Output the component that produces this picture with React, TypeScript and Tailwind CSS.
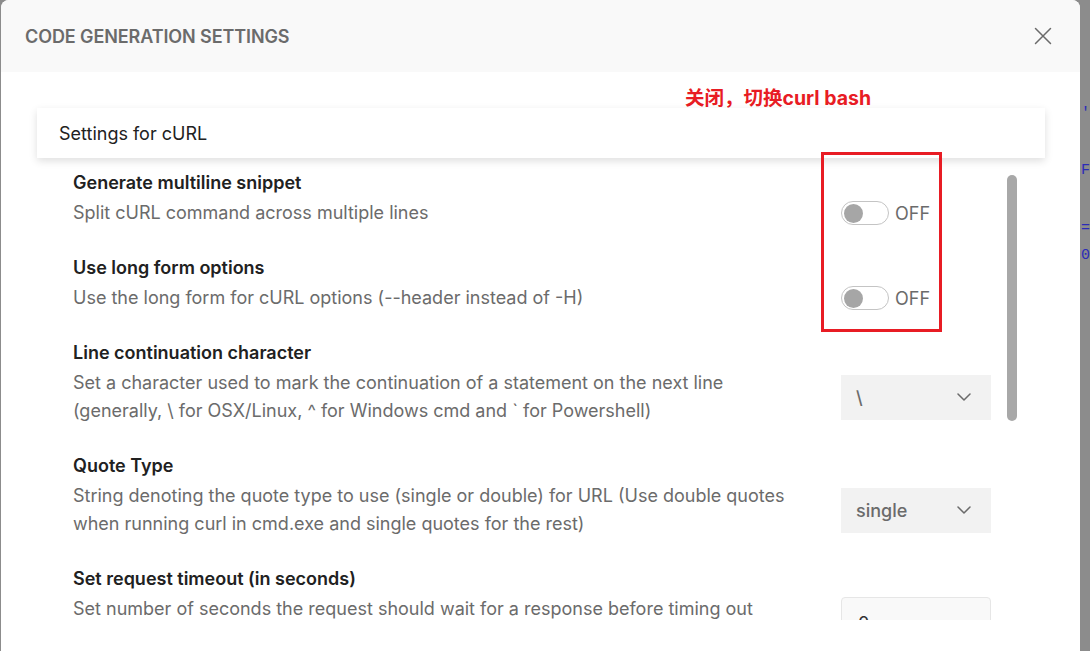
const font = { fontFamily: "Inter, 'Noto Sans CJK SC', sans-serif" }

const Toggle = () => (
  <div className="flex items-center">
    <div className="w-[48px] h-[24px] rounded-full border border-[#c4c4c4] bg-white flex items-center pl-[2px]">
      <div className="w-[19px] h-[19px] rounded-full bg-[#a6a6a6]" />
    </div>
    <span className="ml-[6px] text-[18px] text-[#6b6b6b]">OFF</span>
  </div>
)

const Select = ({ value }: { value: string }) => (
  <div className="w-[150px] h-[45px] bg-[#f2f2f2] flex items-center justify-between pl-[15px] pr-[20px]">
    <span className="text-[18px] font-medium text-[#6b6b6b]">{value}</span>
    <svg width="14" height="8" viewBox="0 0 14 8" fill="none">
      <path d="M1 1l6 6 6-6" stroke="#6b6b6b" strokeWidth="1.5" strokeLinecap="round" strokeLinejoin="round" />
    </svg>
  </div>
)

const Row = ({ title, desc, control, descClass = "" }: { title: string; desc: string; control: React.ReactNode; descClass?: string }) => (
  <div className="flex flex-col">
    <div className="text-[18px] leading-[24px] font-semibold text-[#212121]">{title}</div>
    <div className="flex items-center mt-[4px]">
      <div className={"w-[724px] text-[18px] leading-[28px] text-[#6b6b6b] " + descClass}>{desc}</div>
      <div className="ml-[44px]">{control}</div>
    </div>
  </div>
)

export default function App() {
  return (
    <div className="w-[1090px] h-[651px] bg-[#8c8c8c] flex overflow-hidden" style={font}>
      <div className="ml-px w-[1080px] h-full bg-white rounded-t-lg flex flex-col overflow-hidden">
        <div className="h-[72px] shrink-0 bg-[#f9f9f9] flex items-center justify-between pl-[24px] pr-[28px]">
          <span className="text-[18px] font-semibold text-[#6b6b6b] tracking-[-0.1px]">CODE GENERATION SETTINGS</span>
          <svg width="18" height="18" viewBox="0 0 18 18" fill="none">
            <path d="M1.5 1.5l15 15M16.5 1.5l-15 15" stroke="#6b6b6b" strokeWidth="1.5" strokeLinecap="round" />
          </svg>
        </div>

        <div className="relative flex-1 flex flex-col">
          <div className="h-[36px] shrink-0 pl-[684px] pt-[15px]">
            <span className="text-[19.5px] leading-[22px] font-bold text-[#e81c24]">关闭，切换curl bash</span>
          </div>

          <div className="ml-[36px] w-[1008px] h-[50px] shrink-0 bg-white shadow-[0_3px_8px_rgba(0,0,0,0.13)] flex items-center pl-[22px] relative z-10">
            <span className="text-[18px] text-[#212121]">Settings for cURL</span>
          </div>

          <div className="relative h-[462px] shrink-0 overflow-hidden pl-[72px] pt-[13px] flex flex-col gap-[29px]">
            <Row title="Generate multiline snippet" desc="Split cURL command across multiple lines" control={<Toggle />} />
            <Row title="Use long form options" desc="Use the long form for cURL options (--header instead of -H)" control={<Toggle />} />
            <Row
              title="Line continuation character"
              desc="Set a character used to mark the continuation of a statement on the next line (generally, \ for OSX/Linux, ^ for Windows cmd and ` for Powershell)"
              control={<Select value="\" />}
            />
            <Row
              title="Quote Type"
              desc="String denoting the quote type to use (single or double) for URL (Use double quotes when running curl in cmd.exe and single quotes for the rest)"
              control={<Select value="single" />}
            />
            <Row
              title="Set request timeout (in seconds)"
              desc="Set number of seconds the request should wait for a response before timing out"
              descClass="h-[56px]"
              control={
                <div className="w-[150px] h-[52px] rounded-[4px] border border-[#e6e6e6] bg-[#f9f9f9] pl-[16px] flex items-center text-[18px] text-[#333333]">
                  0
                </div>
              }
            />
            <div className="absolute left-[1006px] top-[17px] w-[10px] h-[246px] rounded-full bg-[#a8a8a8]" />
          </div>

          <div className="absolute left-[820px] top-[80px] w-[121px] h-[180px] border-[3px] border-[#e81c24] z-20" />
        </div>
      </div>

      <div className="flex-1 flex flex-col pl-[1px] text-[#2b2bb8] text-[15px] leading-[15px]" style={{ fontFamily: "'Liberation Mono', monospace" }}>
        <span className="mt-[106px]">'</span>
        <span className="mt-[42px]">F</span>
        <span className="mt-[43px]">=</span>
        <span className="mt-[12px]">0</span>
      </div>
    </div>
  )
}
